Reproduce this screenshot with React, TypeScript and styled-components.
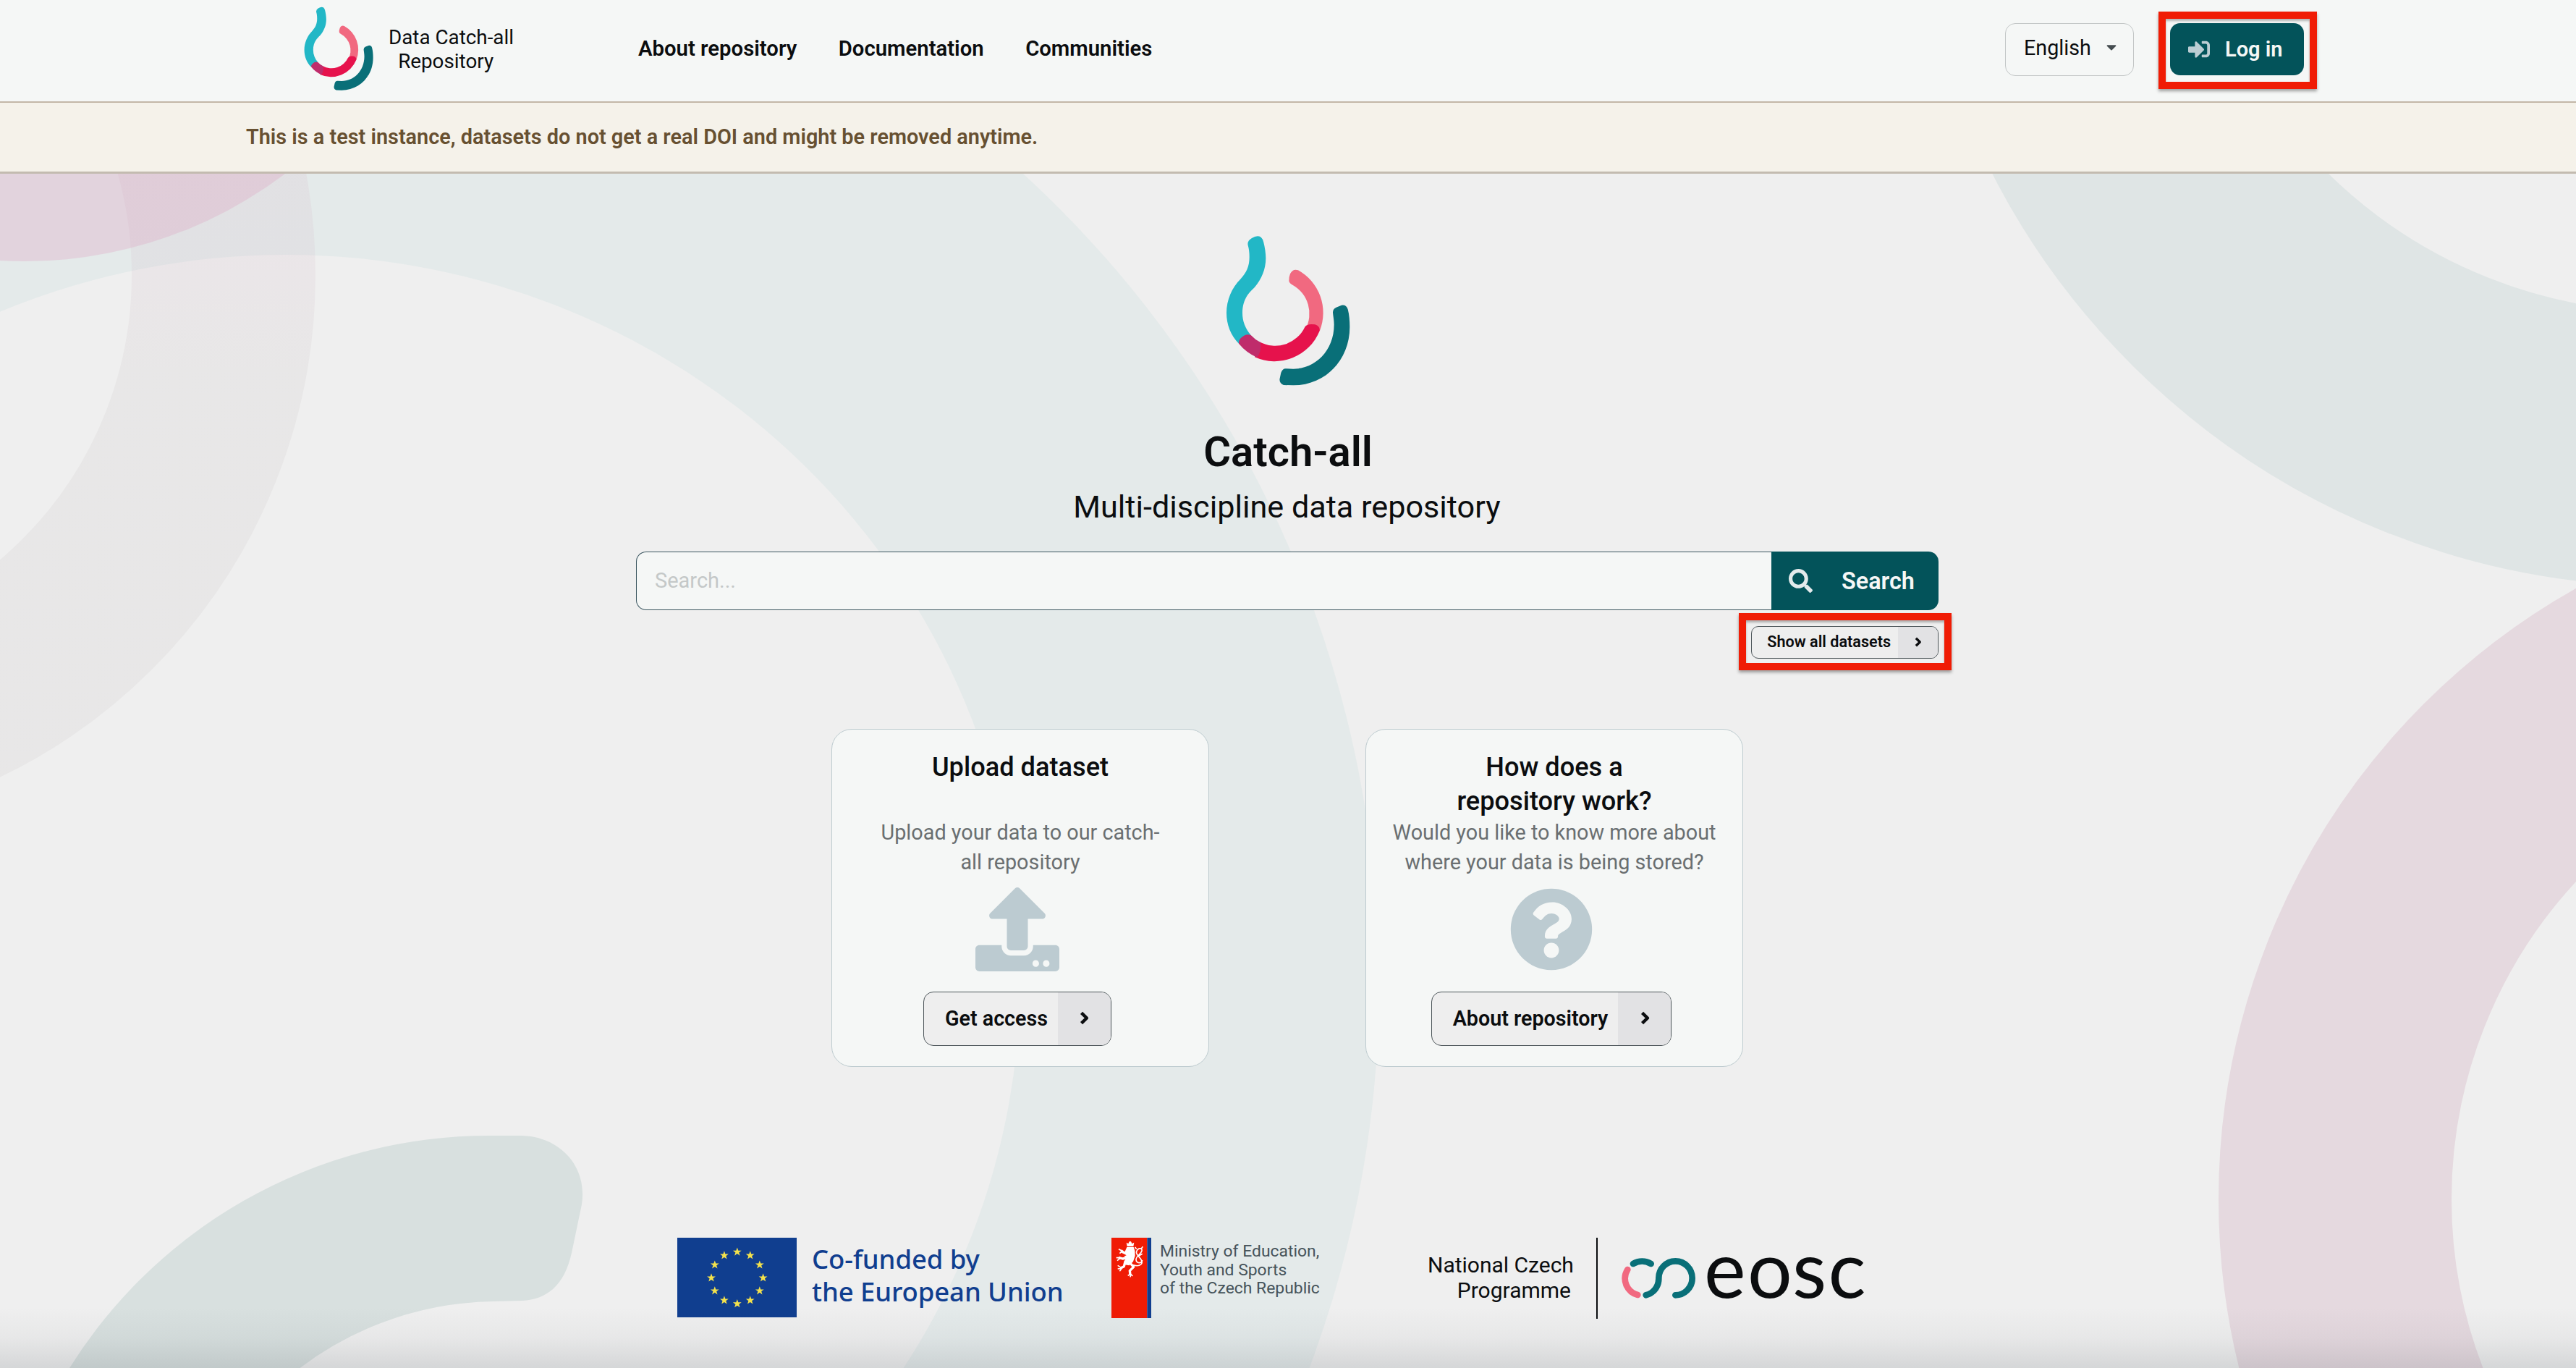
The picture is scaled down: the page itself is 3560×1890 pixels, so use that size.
import styled, { createGlobalStyle } from "styled-components";
import { FaCaretDown, FaQuestionCircle, FaSearch, FaSignInAlt, FaUpload } from "react-icons/fa";

const ink = "#0b0d0f";
const teal = "#03535a";
const surface = "#f5f7f6";
const marker = "#f01c05";

const GlobalStyle = createGlobalStyle`
  * {
    box-sizing: border-box;
  }
  body {
    margin: 0;
    background: #efefef;
    color: ${ink};
    font-family: Roboto, "Liberation Sans", sans-serif;
  }
`;

const Page = styled.div`
  position: relative;
  display: flex;
  flex-direction: column;
  width: 3560px;
  height: 1890px;
  overflow: hidden;
`;

const Backdrop = styled.svg`
  position: absolute;
  inset: 0;
  z-index: -1;
`;

const BottomFade = styled.div`
  position: absolute;
  left: 0;
  right: 0;
  bottom: 0;
  height: 84px;
  background: linear-gradient(rgba(40, 50, 60, 0), rgba(40, 50, 60, 0.04) 50%, rgba(40, 50, 60, 0.13));
`;

const Header = styled.header`
  display: flex;
  align-items: flex-start;
  height: 142px;
  padding: 0 376px 0 420px;
  background: ${surface};
  border-bottom: 2px solid #c3b7a8;
`;

const HeaderLogo = styled.div`
  margin-top: 9px;
  height: 117px;
`;

const RepoName = styled.p`
  margin: 35px 0 0 21px;
  width: 172px;
  font-size: 27.8px;
  line-height: 33px;
  text-align: center;
  white-space: nowrap;
`;

const Nav = styled.nav`
  display: flex;
  gap: 57.5px;
  margin: 49px auto 0 173px;
`;

const NavLink = styled.a`
  font-size: 29.3px;
  line-height: 36px;
  font-weight: 600;
`;

const Language = styled.div`
  display: flex;
  align-items: center;
  justify-content: space-between;
  width: 178px;
  height: 73px;
  margin: 32px 50px 0 0;
  padding: 0 19px 6px 25px;
  border: 1px solid #c2c6c6;
  border-radius: 14px;
  font-size: 28.7px;
  svg {
    color: #454c50;
    margin-bottom: 2px;
  }
`;

const Marked = styled.div<{ $inset: string }>`
  position: relative;
  &::after {
    content: "";
    position: absolute;
    inset: ${(p) => p.$inset};
    border: 10px solid ${marker};
    box-shadow: 0 3px 4px rgba(60, 60, 60, 0.45), inset 0 3px 3px rgba(60, 60, 60, 0.35);
  }
`;

const LoginButton = styled.button`
  display: flex;
  align-items: center;
  gap: 21px;
  width: 185px;
  height: 72px;
  margin-top: 32px;
  padding: 0 0 0 25px;
  border: 0;
  border-radius: 14px;
  background: ${teal};
  color: ${surface};
  font: 600 29px Roboto, sans-serif;
  svg {
    color: #bccdd3;
  }
`;

const Banner = styled.div`
  height: 98px;
  padding: 30px 340px 0;
  background: #f5f2ea;
  border-bottom: 3px solid #c3bbb0;
  color: #675031;
  font-size: 28.87px;
  line-height: 34px;
  font-weight: 600;
`;

const Main = styled.main`
  display: flex;
  flex-direction: column;
  align-items: center;
  padding-top: 85px;
`;

const HeroLogo = styled.div`
  height: 208px;
`;

const Title = styled.h1`
  margin: 59px 0 0;
  font-size: 58px;
  line-height: 64px;
  font-weight: 600;
`;

const Subtitle = styled.p`
  margin: 20px 3px 0 0;
  font-size: 43.2px;
  line-height: 50px;
`;

const SearchArea = styled.div`
  display: flex;
  flex-direction: column;
  align-items: flex-end;
  gap: 22px;
  width: 1800px;
  margin: 36px 2px 0 0;
`;

const SearchBar = styled.div`
  display: flex;
  width: 100%;
  height: 81px;
`;

const SearchField = styled.div`
  flex: 1;
  padding: 21px 25px;
  border: 2px solid #3b5660;
  border-width: 1.5px 0 1.5px 1.5px;
  border-radius: 14px 0 0 14px;
  background: ${surface};
  color: #c4c8c8;
  font-size: 29px;
  line-height: 36px;
`;

const SearchButton = styled.button`
  display: flex;
  align-items: center;
  gap: 40px;
  width: 231px;
  padding: 0 0 0 24px;
  border: 0;
  border-radius: 0 14px 14px 0;
  background: ${teal};
  color: ${surface};
  font: 600 32.4px Roboto, sans-serif;
  svg {
    color: #e3eaec;
  }
`;

const SplitButton = styled.button<{ $small?: boolean }>`
  display: flex;
  height: ${(p) => (p.$small ? 45 : 75)}px;
  padding: 0;
  overflow: hidden;
  border: 1px solid #4c5559;
  border-radius: ${(p) => (p.$small ? 10 : 14)}px;
  background: #eeeeee;
  color: ${ink};
  font: 600 ${(p) => (p.$small ? 21.6 : 28.7)}px Roboto, sans-serif;
`;

const SplitLabel = styled.span<{ $small?: boolean }>`
  align-self: center;
  padding: ${(p) => (p.$small ? "0 10px 2px 21px" : "0 14px 2px 29px")};
`;

const SplitArrow = styled.span<{ $small?: boolean }>`
  display: flex;
  align-items: center;
  justify-content: center;
  align-self: stretch;
  width: ${(p) => (p.$small ? 55 : 73)}px;
  padding: 0 0 2px 1px;
  background: #e2e2e4;
`;

const Cards = styled.div`
  display: flex;
  gap: 216px;
  margin-top: 97px;
  padding-right: 2px;
`;

const Card = styled.section`
  display: flex;
  flex-direction: column;
  align-items: center;
  width: 522px;
  height: 467px;
  padding-top: 28px;
  border: 1px solid #bdcbcf;
  border-radius: 28px;
  background: ${surface};
  text-align: center;
`;

const CardTitle = styled.h2`
  height: 94px;
  margin: 0;
  font-size: 36.2px;
  line-height: 47px;
  font-weight: 500;
`;

const CardText = styled.p`
  margin: 0;
  color: #6a6f71;
  font-size: 28.8px;
  line-height: 41px;
  white-space: nowrap;
`;

const CardIcon = styled.div`
  height: 116px;
  margin: 14px 8px 28px 0;
  color: #bccbd1;
`;

const CardAction = styled.div`
  margin-right: 8px;
`;

const Footer = styled.footer`
  display: flex;
  align-items: flex-start;
  margin: 236px 0 0 936px;
  height: 112px;
`;

const EuText = styled.p`
  width: 414px;
  margin: 7px 0 0 21px;
  color: #103e8f;
  font-family: "Noto Sans", sans-serif;
  font-size: 36.5px;
  font-weight: 500;
  line-height: 45px;
  letter-spacing: -0.1px;
  white-space: nowrap;
`;

const MinistryText = styled.p`
  width: 370px;
  margin: 6px 0 0 12px;
  color: #46535a;
  font-size: 22.9px;
  line-height: 25.5px;
`;

const Programme = styled.p`
  width: 235px;
  height: 112px;
  margin: 0;
  padding: 20px 35px 0 0;
  border-right: 2px solid ${ink};
  font-size: 30px;
  line-height: 35px;
  text-align: right;
  white-space: nowrap;
`;

const EoscMark = styled.svg`
  margin-left: 26px;
  overflow: visible;
`;

const EoscText = styled.text`
  fill: ${ink};
  font-family: Lato, sans-serif;
  font-size: 109px;
`;

function CatchLogo({ width }: { width: number }) {
  return (
    <svg width={width} height={(width * 625) / 516} viewBox="160 75 516 625">
      <path
        fill="#22b7c6"
        d="M252 117Q248 98 268 87Q290 73 306 83Q314 90 317 105C322 125 326 150 326 170C326 215 308 258 280 290C262 308 229 335 229 397C229 432 241 462 264 489L214 524C180 490 163 445 163 397C163 345 185 292 222 256C245 230 258 205 258 165C258 145 256 130 252 117Z"
      />
      <path
        fill="#f16980"
        d="M422 265Q421 250 427 235Q438 212 460 220A202 202 0 0 1 550 470L490 465A136 136 0 0 0 437 281Q424 275 422 265Z"
      />
      <path
        fill="#e6124c"
        d="M488 455Q498 440 530 445Q552 452 549 472A202 202 0 0 1 280 580L300 517A136 136 0 0 0 488 455Z"
      />
      <path
        fill="#bf2c6b"
        d="M214 524Q213 508 226 498Q244 481 264 489A136 136 0 0 0 304 519Q309 560 289 581A202 202 0 0 1 214 524Z"
      />
      <path
        fill="#096f78"
        d="M604 395Q604 380 618 374L640 365Q660 362 666 382C672 405 674 430 674 455C674 590 575 697 440 697L400 696Q380 688 384 668L389 645Q396 625 412 628L440 629C530 629 609 555 609 445C609 425 605 410 604 395Z"
      />
    </svg>
  );
}

function Chevron({ size }: { size: number }) {
  return (
    <svg width={size * 0.72} height={size} viewBox="0 0 13 18" fill="none">
      <path d="M2.4 2.2 9.4 9l-7 6.8" stroke={ink} strokeWidth="4.2" strokeLinejoin="round" />
    </svg>
  );
}

function EuFlag() {
  const stars = Array.from({ length: 12 }, (_, i) => (i * Math.PI) / 6);
  const star = "M0-6.2 1.5-2H5.9L2.4.7 3.7 5 0 2.4-3.7 5-2.4.7-5.9-2H-1.5Z";
  return (
    <svg width="165" height="110" viewBox="0 0 165 110">
      <rect width="165" height="110" fill="#103e8f" />
      {stars.map((a) => (
        <path key={a} d={star} fill="#f4e24c" transform={`translate(${82.8 + 35.8 * Math.sin(a)} ${55.5 - 35.8 * Math.cos(a)})`} />
      ))}
    </svg>
  );
}

function MinistryFlag() {
  return (
    <svg width="55" height="111" viewBox="20 29 165 333">
      <rect x="20" y="29" width="148" height="333" fill={marker} />
      <rect x="168" y="29" width="17" height="333" fill="#103e8f" />
      <g fill="#fff">
        <path d="M82 49l8 5 3-8 5-3 4 3 3 8 9-5-3 16H85z" />
        <path d="M84 68h28l5 14 1 22-8 24-16 16-24-4 10-28-8-6 10-4-10-6 4-10z" />
      </g>
      <g fill="none" stroke="#fff" strokeLinejoin="round">
        <path strokeWidth="10" d="M92 97 70 90 60 82M90 112 66 116 50 111M78 124 72 148 58 155M92 128 112 150 96 166 98 184" />
        <path strokeWidth="5" d="M64 84 50 76M64 86 54 94M56 112 40 112M56 114 44 124M62 154 46 144M62 156 46 158M62 157 54 168M100 180 88 186M100 180 108 188M100 182 98 192" />
        <path
          strokeWidth="5"
          d="M108 142C140 152 154 136 142 118 132 104 120 98 124 86 130 70 150 70 146 84 142 98 122 104 122 120 124 136 144 138 148 122M124 76l-6-8M144 74l6-8M134 104l14-8"
        />
      </g>
    </svg>
  );
}

function EoscLogo() {
  return (
    <EoscMark width="350" height="112" viewBox="0 0 350 112">
      <g transform="translate(-44 -10) scale(.3333)" fill="none" strokeWidth="26" strokeLinecap="round">
        <path stroke="#f16980" d="M178 162A70 70 0 0 0 220 267" />
        <path stroke="#096f78" d="M201 138A72 72 0 0 1 275 138M254 268A70 70 0 0 0 307 198A69.5 70.5 0 1 1 376 268" />
      </g>
      <EoscText x="121 181 243 292.5" y="83">
        eosc
      </EoscText>
    </EoscMark>
  );
}

function Shapes() {
  return (
    <Backdrop width="3560" height="1890" viewBox="0 0 3560 1890" fill="none">
      <defs>
        <linearGradient id="mauve" gradientUnits="userSpaceOnUse" x1="0" y1="240" x2="0" y2="520">
          <stop offset="0" stopColor="#d2a2b8" stopOpacity=".13" />
          <stop offset=".4" stopColor="#cca8bc" stopOpacity=".13" />
          <stop offset="1" stopColor="#b4acae" stopOpacity=".12" />
        </linearGradient>
      </defs>
      <circle cx="390" cy="1358" r="1516" fill="#e4eaea" />
      <ellipse cx="395" cy="1350" rx="1015" ry="998" fill="#efefef" />
      <circle cx="34" cy="-235" r="596" fill="#dc96be" fillOpacity=".27" />
      <circle cx="-334" cy="380" r="643" stroke="url(#mauve)" strokeWidth="254" />
      <circle cx="3686" cy="-238" r="858.5" stroke="#dfe5e5" strokeWidth="379" />
      <circle cx="4034" cy="1657" r="807" stroke="#e5d9df" strokeWidth="322" />
      <path
        fill="#d8e0df"
        d="M84 1910A684 684 0 0 1 681 1569L722 1569C775 1571 812 1612 804 1664L790 1731C780 1776 756 1795 722 1797L681 1798A454 454 0 0 0 390 1910Z"
      />
    </Backdrop>
  );
}

export default function App() {
  return (
    <Page>
      <GlobalStyle />
      <Shapes />
      <Header>
        <HeaderLogo>
          <CatchLogo width={96} />
        </HeaderLogo>
        <RepoName>
          Data Catch-all
          <br />
          Repository&nbsp;&nbsp;
        </RepoName>
        <Nav>
          <NavLink>About repository</NavLink>
          <NavLink>Documentation</NavLink>
          <NavLink>Communities</NavLink>
        </Nav>
        <Language>
          English
          <FaCaretDown size={22} />
        </Language>
        <Marked $inset="16px -18px -19px -16px">
          <LoginButton>
            <FaSignInAlt size={30} />
            Log in
          </LoginButton>
        </Marked>
      </Header>
      <Banner>This is a test instance, datasets do not get a real DOI and might be removed anytime.</Banner>
      <Main>
        <HeroLogo>
          <CatchLogo width={172} />
        </HeroLogo>
        <Title>Catch-all</Title>
        <Subtitle>Multi-discipline data repository</Subtitle>
        <SearchArea>
          <SearchBar>
            <SearchField>Search...</SearchField>
            <SearchButton>
              <FaSearch size={33} />
              Search
            </SearchButton>
          </SearchBar>
          <Marked $inset="-18px -18px -16px -17px">
            <SplitButton $small>
              <SplitLabel $small>Show all datasets</SplitLabel>
              <SplitArrow $small>
                <Chevron size={14} />
              </SplitArrow>
            </SplitButton>
          </Marked>
        </SearchArea>
        <Cards>
          <Card>
            <CardTitle>Upload dataset</CardTitle>
            <CardText>
              Upload your data to our catch-
              <br />
              all repository
            </CardText>
            <CardIcon>
              <FaUpload size={116} />
            </CardIcon>
            <CardAction>
              <SplitButton>
                <SplitLabel>Get access</SplitLabel>
                <SplitArrow>
                  <Chevron size={19} />
                </SplitArrow>
              </SplitButton>
            </CardAction>
          </Card>
          <Card>
            <CardTitle>
              How does a
              <br />
              repository work?
            </CardTitle>
            <CardText>
              Would you like to know more about
              <br />
              where your data is being stored?
            </CardText>
            <CardIcon>
              <FaQuestionCircle size={116} />
            </CardIcon>
            <CardAction>
              <SplitButton>
                <SplitLabel>About repository</SplitLabel>
                <SplitArrow>
                  <Chevron size={19} />
                </SplitArrow>
              </SplitButton>
            </CardAction>
          </Card>
        </Cards>
      </Main>
      <Footer>
        <EuFlag />
        <EuText>
          Co-funded by
          <br />
          the European Union
        </EuText>
        <MinistryFlag />
        <MinistryText>
          Ministry of Education,
          <br />
          Youth and Sports
          <br />
          of the Czech Republic
        </MinistryText>
        <Programme>
          National Czech
          <br />
          Programme
        </Programme>
        <EoscLogo />
      </Footer>
      <BottomFade />
    </Page>
  );
}
